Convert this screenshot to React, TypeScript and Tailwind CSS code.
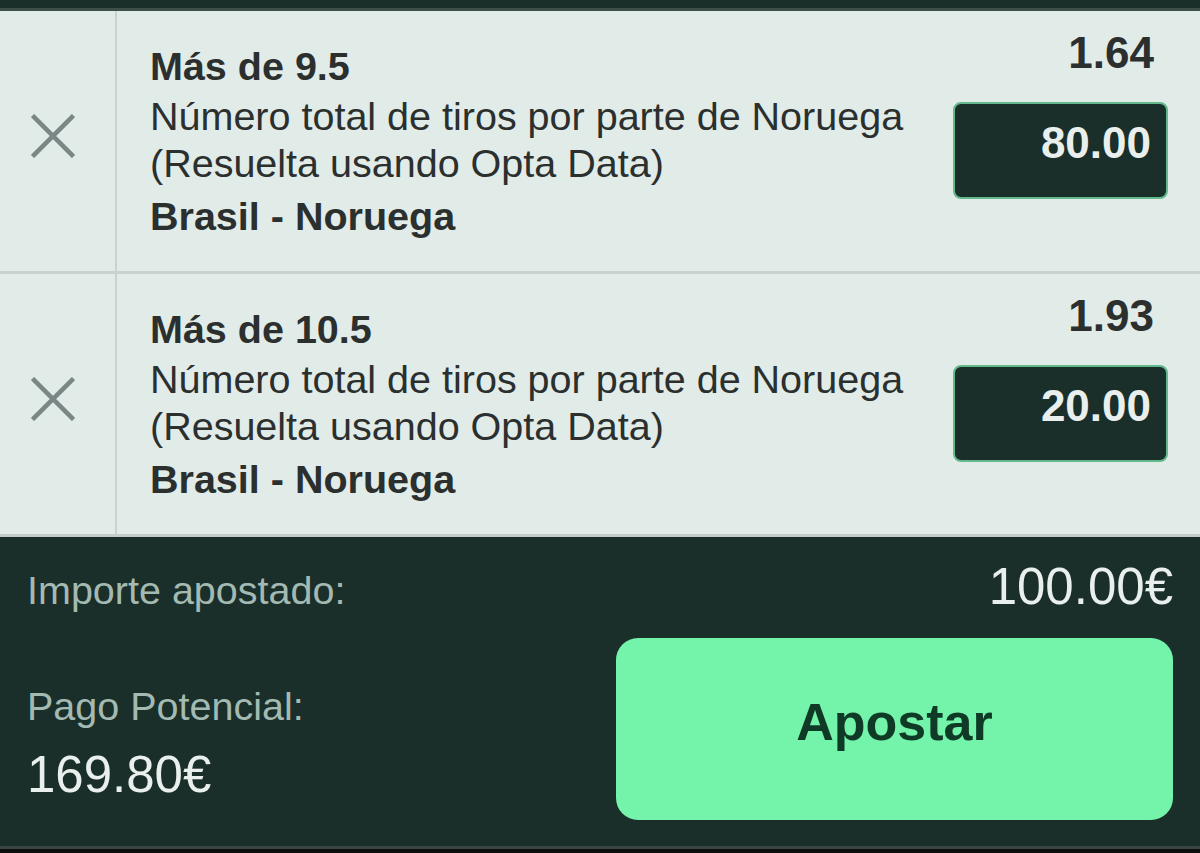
import React from "react";

type Bet = { title: string; odds: string; stake: string };

const bets: Bet[] = [
  { title: "Más de 9.5", odds: "1.64", stake: "80.00" },
  { title: "Más de 10.5", odds: "1.93", stake: "20.00" },
];

function XIcon() {
  return (
    <svg width="44" height="44" viewBox="0 0 44 44" fill="none">
      <path d="M1.5 1.5 L42.5 42.5 M42.5 1.5 L1.5 42.5" stroke="#7b8784" strokeWidth="4.5" strokeLinecap="butt" />
    </svg>
  );
}

function BetRow({ bet }: { bet: Bet }) {
  return (
    <div className="flex h-[260px]">
      <div className="w-[117px] shrink-0 border-r-2 border-[#c8d3cf] flex items-center justify-center pb-[10px] pr-[10px]">
        <XIcon />
      </div>
      <div className="flex-1 flex pl-[33px] pr-[32px]">
        <div className="flex-1 flex flex-col pt-[32px] text-[#2b2f2e]">
          <div className="text-[39.5px] leading-[47px] font-bold">{bet.title}</div>
          <div className="text-[39.5px] leading-[47px] mt-[3px]">
            Número total de tiros por parte de Noruega
            <br />
            (Resuelta usando Opta Data)
          </div>
          <div className="text-[39.5px] leading-[47px] font-bold mt-[6px]">Brasil - Noruega</div>
        </div>
        <div className="w-[215px] shrink-0 flex flex-col items-end pt-[17px]">
          <div className="text-[44px] leading-[50px] font-bold text-[#2b2f2e] pr-[14px]">{bet.odds}</div>
          <div className="mt-[24px] w-[215px] h-[97px] rounded-[8px] border-[2.5px] border-[#62ba8c] bg-[#1a2e2a] flex justify-end pr-[15px] pt-[14px]">
            <span className="text-[44px] leading-[50px] font-bold text-[#e8efec]">{bet.stake}</span>
          </div>
        </div>
      </div>
    </div>
  );
}

export default function App() {
  return (
    <div
      className="w-[1200px] h-[853px] flex flex-col bg-[#0c0f0e] overflow-hidden"
      style={{ fontFamily: '"Liberation Sans", Arial, sans-serif' }}
    >
      <div className="h-[8px] bg-[#1a2e2a]" />
      <div className="h-[3px] bg-[#3d4f4a]" />
      <div className="bg-[#e1ebe8]">
        <BetRow bet={bets[0]} />
        <div className="h-[3px] bg-[#c8d3cf]" />
        <BetRow bet={bets[1]} />
        <div className="h-[3px] bg-[#c3cdc9]" />
      </div>
      <div className="bg-[#1a2e2a] h-[309px] px-[27px] pt-[22px] flex flex-col">
        <div className="flex justify-between items-baseline h-[56px]">
          <span className="text-[39.5px] leading-[47px] text-[#a3bab2]">Importe apostado:</span>
          <span className="text-[51px] leading-[56px] text-[#e8efec]">100.00€</span>
        </div>
        <div className="flex mt-[23px]">
          <div className="flex-1 flex flex-col pt-[45px]">
            <span className="text-[39.5px] leading-[47px] text-[#a3bab2]">Pago Potencial:</span>
            <span className="text-[51px] leading-[56px] text-[#e8efec] mt-[17px]">169.80€</span>
          </div>
          <button className="w-[557px] h-[182px] rounded-[22px] bg-[#74f4ab] flex items-center justify-center pb-[14px]">
            <span className="text-[52px] leading-[60px] font-bold text-[#0f3a26]">Apostar</span>
          </button>
        </div>
      </div>
      <div className="h-[3px] bg-[#3a4441]" />
    </div>
  );
}
